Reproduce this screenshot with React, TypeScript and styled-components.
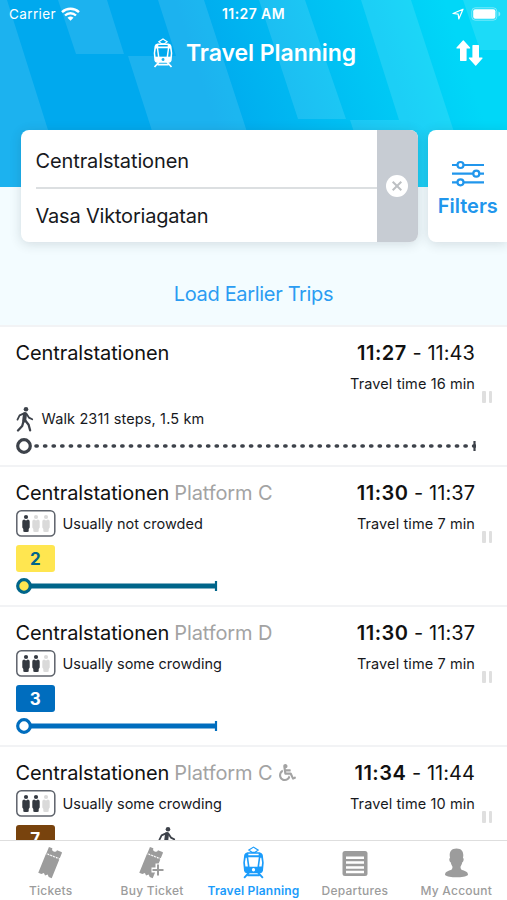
import React from 'react';
import styled, { createGlobalStyle } from 'styled-components';
import { FaWheelchair } from 'react-icons/fa';

const GlobalStyle = createGlobalStyle`
  * { box-sizing: border-box; }
  body { margin: 0; background: #fff; overflow: hidden; font-family: Inter, sans-serif; color: #17191d; }
`;

const Screen = styled.div`
  width: 507px;
  height: 900px;
  display: flex;
  flex-direction: column;
  overflow: hidden;
`;

const Hero = styled.header`
  position: relative;
  height: 325px;
  flex: none;
  background: #f3fcff;
`;

const Backdrop = styled.svg`
  position: absolute;
  left: 0;
  top: 0;
`;

const HeroContent = styled.div`
  position: relative;
  display: flex;
  flex-direction: column;
`;

const StatusBar = styled.div`
  display: grid;
  grid-template-columns: 1fr auto 1fr;
  align-items: center;
  height: 28px;
  padding: 0 6px 0 9px;
  color: #fff;
  font-size: 13.5px;
  line-height: 28px;
`;

const Carrier = styled.div`
  display: flex;
  align-items: center;
  gap: 5px;
  letter-spacing: 0.38px;
`;

const Clock = styled.div`
  font-weight: 600;
  font-size: 14px;
  letter-spacing: 0.4px;
  margin-left: -3px;
`;

const Indicators = styled.div`
  display: flex;
  align-items: center;
  justify-content: flex-end;
  gap: 7px;
`;

const TitleBar = styled.div`
  display: grid;
  grid-template-columns: 60px 1fr 60px;
  align-items: center;
  height: 50px;
`;

const Title = styled.h1`
  grid-column: 2;
  display: flex;
  align-items: center;
  justify-content: center;
  gap: 13px;
  padding-left: 2px;
  margin: 0;
  color: #fff;
  font-size: 23px;
  font-weight: 600;
  letter-spacing: -0.05px;
  white-space: nowrap;
`;

const SwapButton = styled.div`
  display: flex;
  padding-left: 9px;
`;

const SearchRow = styled.div`
  display: flex;
  gap: 10px;
  height: 112px;
  margin: 52px 0 0 20.500px;
`;

const SearchCard = styled.div`
  display: flex;
  width: 397px;
  flex: none;
  border-radius: 8px;
  overflow: hidden;
  background: #fff;
  box-shadow: 0 2px 12px rgba(40, 50, 60, 0.16);
`;

const Fields = styled.div`
  flex: 1;
  padding-left: 15px;
`;

const Field = styled.div<{ $ruled?: boolean }>`
  height: ${(p) => (p.$ruled ? 59 : 53)}px;
  padding-top: ${(p) => (p.$ruled ? 4 : 0)}px;
  border-bottom: ${(p) => (p.$ruled ? '2px solid #dcdfe1' : 'none')};
  font-size: 20px;
  line-height: 55px;
  letter-spacing: ${(p) => (p.$ruled ? -0.12 : -0.2)}px;
`;

const ClearStrip = styled.div`
  width: 41px;
  display: flex;
  align-items: center;
  justify-content: center;
  background: #c7ccd3;
`;

const FilterCard = styled.div`
  flex: 1;
  display: flex;
  flex-direction: column;
  align-items: center;
  padding: 29px 0 0 1px;
  border-radius: 8px 0 0 8px;
  background: #fff;
  color: #2196ec;
  box-shadow: 0 2px 12px rgba(40, 50, 60, 0.16);
  font-size: 20px;
  font-weight: 600;
  line-height: 27px;
  gap: 6px;
`;

const EarlierLink = styled.div`
  margin-top: 38px;
  text-align: center;
  font-size: 20px;
  line-height: 28px;
  letter-spacing: -0.33px;
  color: #2b9cf2;
`;

const TripList = styled.main`
  height: 515px;
  overflow: hidden;
`;

const Trip = styled.article`
  display: grid;
  grid-template-columns: 459.500px 10px;
  column-gap: 7px;
  height: 140px;
  padding: 10px 0 0 15.500px;
  border-top: 2px solid #f2f3f5;
`;

const TripBody = styled.div`
  display: flex;
  flex-direction: column;
`;

const Line = styled.div<{ $height: number }>`
  display: flex;
  align-items: center;
  justify-content: space-between;
  height: ${(p) => p.$height}px;
`;

const TitleLine = styled(Line)`
  margin-bottom: 2px;
`;

const Stop = styled.div`
  display: flex;
  align-items: center;
  gap: 5px;
  font-size: 20px;
  letter-spacing: -0.1px;
  color: #111;
`;

const Platform = styled.span`
  color: #a3a3a3;
  font-weight: 400;
  display: flex;
  align-items: center;
  gap: 6px;
`;

const Times = styled.div`
  font-size: 20px;
  letter-spacing: 0.05px;
  color: #111;
  b {
    font-weight: 600;
    letter-spacing: 0.5px;
  }
`;

const Small = styled.div`
  display: flex;
  align-items: center;
  gap: 7px;
  font-size: 14.5px;
  letter-spacing: 0.1px;
`;

const CrowdNote = styled(Small)`
  letter-spacing: 0;
`;

const WalkNote = styled(Small)`
  letter-spacing: 0.13px;
`;

const Legs = styled.div`
  display: flex;
  align-items: center;
  gap: 103px;
  height: 27px;
  margin: 8px 0 6px;
`;

const Badge = styled.div<{ $bg: string; $fg: string }>`
  width: 39.500px;
  height: 27px;
  border-radius: 3px;
  background: ${(p) => p.$bg};
  color: ${(p) => p.$fg};
  font-size: 17px;
  font-weight: 700;
  line-height: 28px;
  text-align: center;
`;

const Handle = styled.div`
  display: flex;
  justify-content: space-between;
  height: 12px;
  margin-top: 54px;
  &::before, &::after {
    content: '';
    width: 3.500px;
    background: #dfdfdf;
    border-radius: 1px;
  }
`;

const TabBar = styled.nav`
  display: grid;
  grid-template-columns: repeat(5, 1fr);
  height: 60px;
  border-top: 1px solid #dedede;
  background: #fff;
`;

const Tab = styled.div<{ $active?: boolean }>`
  display: flex;
  flex-direction: column;
  align-items: center;
  padding-top: 5px;
  gap: 3px;
  color: ${(p) => (p.$active ? '#1b9cfb' : '#9c9c9c')};
  font-size: 12px;
  font-weight: ${(p) => (p.$active ? 600 : 500)};
  line-height: 18px;
  letter-spacing: ${(p) => (p.$active ? 0.2 : 0.25)}px;
  white-space: nowrap;
`;

const TramIcon = ({ width, height }: { width: number; height: number }) => (
  <svg width={width} height={height} viewBox="0 0 20 30" fill="none" stroke="currentColor">
    <path d="M5.8 3.700 10 1l4.200 2.700-2.700 2h-3z" strokeWidth="1.1" />
    <path
      d="M4.500 5.600h11q2.300.5 2.900 2.400l.9 7.200-.7 7.200q-.4 2-2.400 2.300H3.800q-2-.3-2.400-2.300L.7 15.200 1.600 8q.6-1.900 2.900-2.400zM5.300 7v1.500h9.400V7zM5.200 10.200l1.200 8.600h7.200l1.200-8.600zM2.900 10.600 2.200 15l.4 3.700h2.300L3.800 10.600zM17.100 10.600h-.9l-1.100 8.100h2.300l.4-3.700zM10 20.100a1.500 1.500 0 1 0 .01 3 1.500 1.500 0 1 0-.01-3z"
      fill="currentColor"
      fillRule="evenodd"
      stroke="none"
    />
    <path d="m6 24-4.500 5M14 24l4.500 5M4.500 26.600h11" strokeWidth="1.7" />
  </svg>
);

const WifiIcon = () => (
  <svg width="19" height="14" viewBox="0 0 19 14" fill="none" stroke="#fff" strokeWidth="2.4">
    <path d="M1 5.200a12.300 12.300 0 0 1 17 0M4 8.500a8 8 0 0 1 11 0" />
    <path d="M6.500 10.800a4.400 4.400 0 0 1 6 0l-3 3z" fill="#fff" stroke="none" />
  </svg>
);

const LocationIcon = () => (
  <svg width="12" height="12" viewBox="0 0 12 12" fill="none" stroke="#fff" strokeWidth="1.2" strokeLinejoin="round">
    <path d="m1 5.500 10-4.300L6.800 11l-.6-4.800z" />
  </svg>
);

const BatteryIcon = () => (
  <svg width="30" height="14" viewBox="0 0 30 14">
    <rect x=".8" y=".8" width="25" height="12.4" rx="3.5" fill="none" stroke="#fff" strokeOpacity=".4" />
    <rect x="2.2" y="2.3" width="22.2" height="9.4" rx="2" fill="#fff" />
    <path d="M27.500 4.500v5q1.800-.6 1.800-2.500t-1.800-2.500" fill="#fff" fillOpacity=".5" />
  </svg>
);

const SwapIcon = () => (
  <svg width="27" height="26" viewBox="0 0 27 26" fill="#fff" stroke="#fff" strokeLinejoin="round" strokeWidth="1.2">
    <path d="M7.300 1 1 8h3.600v12.300h5.400V8h3.600zM19.700 25l-6.300-7h3.600V5.700h5.400V18H26z" />
  </svg>
);

const ClearIcon = () => (
  <svg width="24" height="24" viewBox="0 0 24 24">
    <circle cx="12" cy="12" r="11" fill="#fff" />
    <path d="m7.700 7.700 8.600 8.600m0-8.600-8.600 8.600" stroke="#bdc0c3" strokeWidth="2" />
  </svg>
);

const FilterIcon = () => (
  <svg width="34" height="28" viewBox="0 0 34 28" fill="#fff" stroke="#2196ec" strokeWidth="2.2">
    <path d="M1 6h32M1 14.700h32M1 23.300h32" />
    <circle cx="9.5" cy="6" r="3" />
    <circle cx="25.3" cy="14.7" r="3" />
    <circle cx="9.5" cy="23.3" r="3" />
  </svg>
);

const WalkIcon = () => (
  <svg width="19" height="26" viewBox="0 0 19 26" fill="none" stroke="#3d424a" strokeLinecap="round" strokeLinejoin="round">
    <circle cx="10" cy="3.2" r="2.3" fill="#3d424a" stroke="none" />
    <path d="m9 8-.8 6.500" strokeWidth="4" />
    <path d="M8 7.400 3.600 9.400 1.500 13.600M10.300 7.600l2.600 4 3.300 1.700" strokeWidth="1.8" />
    <path d="m7.600 15-1.400 5L2 24.500M9.300 14.500l3.300 4.300 1.500 5.500" strokeWidth="2.3" />
  </svg>
);

const CrowdIcon = ({ level }: { level: number }) => (
  <svg width="40" height="27" viewBox="0 0 40 27">
    <rect x=".8" y=".8" width="38" height="25.2" rx="4.5" fill="#fff" stroke="#5d626b" strokeWidth="1.5" />
    {[0, 1, 2].map((i) => (
      <g key={i} fill={i < level ? '#343941' : '#dadada'}>
        <circle cx={10 + i * 10} cy="7" r="2.1" />
        <path d={`M${6.3 + i * 10} 11.500q0-1.900 1.900-1.900l1.800 1 1.800-1q1.900 0 1.900 1.900v6l-1 1.500v2.500q-2.700 1.200-5.400 0v-2.500l-1-1.500z`} />
      </g>
    ))}
  </svg>
);

const Track = ({ color, fill, length, dotted }: { color: string; fill: string; length: number; dotted?: boolean }) => (
  <svg width="460" height="16" viewBox="0 0 460 16" fill="none" stroke={color}>
    {dotted ? (
      <path d="M20 8H459" strokeWidth="3.6" strokeLinecap="round" strokeDasharray="1.2 7.38" />
    ) : (
      <path d={`M15 8H${length}`} strokeWidth="5" />
    )}
    <path d={`M${length - 1} 3v10`} strokeWidth="2.2" />
    <circle cx="8" cy="8" r="6.3" strokeWidth="3.2" fill={fill} />
  </svg>
);

const TicketIcon = ({ plus }: { plus?: boolean }) => (
  <svg width="32" height="33" viewBox="0 0 32 33">
    <g transform="rotate(22 15 17)" fill="#9c9c9c">
      <path d="M8 2.500h3.700a2.500 2.500 0 0 0 5 0h4.800q.8 0 .8.8V9H8zM7.800 10.200h14.500V30.500h-3.200l-2-2-2 2-2-2-2 2H7.800z" />
      <path d="M8 9.600h14.500" stroke="#9c9c9c" strokeWidth="1.3" strokeDasharray="1.4 1.6" />
    </g>
    {plus && (
      <>
        <path d="M22 17.500v13M15.500 24h13" stroke="#fff" strokeWidth="5" />
        <path d="M22 18.500v11M16.500 24h11" stroke="#9c9c9c" strokeWidth="2" />
      </>
    )}
  </svg>
);

const DeparturesIcon = () => (
  <svg width="26" height="33" viewBox="0 0 26 33">
    <rect x=".5" y="5" width="25" height="25" rx="2.5" fill="#9c9c9c" />
    <path d="M4 11.800h18M4 16.600h18M4 21.400h18M4 26h18" stroke="#fff" strokeWidth="2.5" />
  </svg>
);

const AccountIcon = () => (
  <svg width="25" height="33" viewBox="0 0 25 33" fill="#9c9c9c">
    <path d="M12.500 2.500c4.800 0 7 2.800 6.800 7l-.3 2.500c1.200.2.7 4-.7 4.300-.6 2.600-1.300 3.500-1.800 4.500 0 3.200 1.500 3.200 4.300 4.200 2.400.8 3.200 2.200 3.200 3.900-3.500 3.200-19.500 3.200-23 0 0-1.700.8-3.100 3.200-3.900 2.800-1 4.300-1 4.300-4.200-.5-1-1.200-1.900-1.800-4.500-1.400-.3-1.900-4.100-.7-4.300l-.3-2.500c-.2-4.200 2-7 6.800-7z" />
  </svg>
);

type TripData = {
  platform?: string;
  accessible?: boolean;
  from: string;
  to: string;
  minutes: number;
  crowding?: number;
  line?: { name: string; bg: string; fg: string; track: string; stop: string };
  walksAfter?: boolean;
};

const trips: TripData[] = [
  { from: '11:27', to: '11:43', minutes: 16 },
  { platform: 'Platform C', from: '11:30', to: '11:37', minutes: 7, crowding: 1, line: { name: '2', bg: '#ffe650', fg: '#00658a', track: '#00658a', stop: '#ffe650' } },
  { platform: 'Platform D', from: '11:30', to: '11:37', minutes: 7, crowding: 2, line: { name: '3', bg: '#006dbe', fg: '#fff', track: '#006dbe', stop: '#fff' } },
  { platform: 'Platform C', accessible: true, from: '11:34', to: '11:44', minutes: 10, crowding: 2, walksAfter: true, line: { name: '7', bg: '#78430d', fg: '#fff', track: '#78430d', stop: '#fff' } },
];

const TripRow = ({ trip }: { trip: TripData }) => (
  <Trip>
    <TripBody>
      <TitleLine $height={31}>
        <Stop>
          Centralstationen
          {trip.platform && (
            <Platform>
              {trip.platform}
              {trip.accessible && <FaWheelchair size={17} />}
            </Platform>
          )}
        </Stop>
        <Times>
          <b>{trip.from}</b> - {trip.to}
        </Times>
      </TitleLine>
      <Line $height={27}>
        <CrowdNote>
          {trip.crowding && (
            <>
              <CrowdIcon level={trip.crowding} />
              {trip.crowding === 1 ? 'Usually not crowded' : 'Usually some crowding'}
            </>
          )}
        </CrowdNote>
        <Small>Travel time {trip.minutes} min</Small>
      </Line>
      <Legs>
        {trip.line ? (
          <Badge $bg={trip.line.bg} $fg={trip.line.fg}>{trip.line.name}</Badge>
        ) : (
          <WalkNote>
            <WalkIcon />
            Walk 2311 steps, 1.5 km
          </WalkNote>
        )}
        {trip.walksAfter && <WalkIcon />}
      </Legs>
      {trip.line ? (
        <Track color={trip.line.track} fill={trip.line.stop} length={201} />
      ) : (
        <Track color="#3d424a" fill="#fff" length={459.5} dotted />
      )}
    </TripBody>
    <Handle />
  </Trip>
);

export default function App() {
  return (
    <Screen>
      <GlobalStyle />
      <Hero>
        <Backdrop width="507" height="187" viewBox="0 0 507 187">
          <defs>
            <linearGradient id="sky" gradientUnits="userSpaceOnUse" x1="210" y1="110" x2="455" y2="30">
              <stop offset="0" stopColor="#00a9ee" />
              <stop offset="1" stopColor="#00d7f8" />
            </linearGradient>
          </defs>
          <path d="M0 0h507v187H0z" fill="url(#sky)" />
          <path
            d="M0 0h7l59 187H0zM58 0h49l17 54H76zM158 0h46l61 187h-95L128 56h48zM259 0h46l41 119h-48zM361 0h50l61 187H372l-22-67h49zM463 0h44v50h-27z"
            fill="#fff"
            fillOpacity=".11"
          />
        </Backdrop>
        <HeroContent>
          <StatusBar>
            <Carrier>Carrier <WifiIcon /></Carrier>
            <Clock>11:27 AM</Clock>
            <Indicators><LocationIcon /><BatteryIcon /></Indicators>
          </StatusBar>
          <TitleBar>
            <Title>
              <TramIcon width={20} height={30} />
              Travel Planning
            </Title>
            <SwapButton><SwapIcon /></SwapButton>
          </TitleBar>
          <SearchRow>
            <SearchCard>
              <Fields>
                <Field $ruled>Centralstationen</Field>
                <Field>Vasa Viktoriagatan</Field>
              </Fields>
              <ClearStrip><ClearIcon /></ClearStrip>
            </SearchCard>
            <FilterCard><FilterIcon />Filters</FilterCard>
          </SearchRow>
          <EarlierLink>Load Earlier Trips</EarlierLink>
        </HeroContent>
      </Hero>
      <TripList>
        {trips.map((trip, i) => <TripRow key={i} trip={trip} />)}
      </TripList>
      <TabBar>
        <Tab><TicketIcon />Tickets</Tab>
        <Tab><TicketIcon plus />Buy Ticket</Tab>
        <Tab $active><TramIcon width={23} height={33} />Travel Planning</Tab>
        <Tab><DeparturesIcon />Departures</Tab>
        <Tab><AccountIcon />My Account</Tab>
      </TabBar>
    </Screen>
  );
}
